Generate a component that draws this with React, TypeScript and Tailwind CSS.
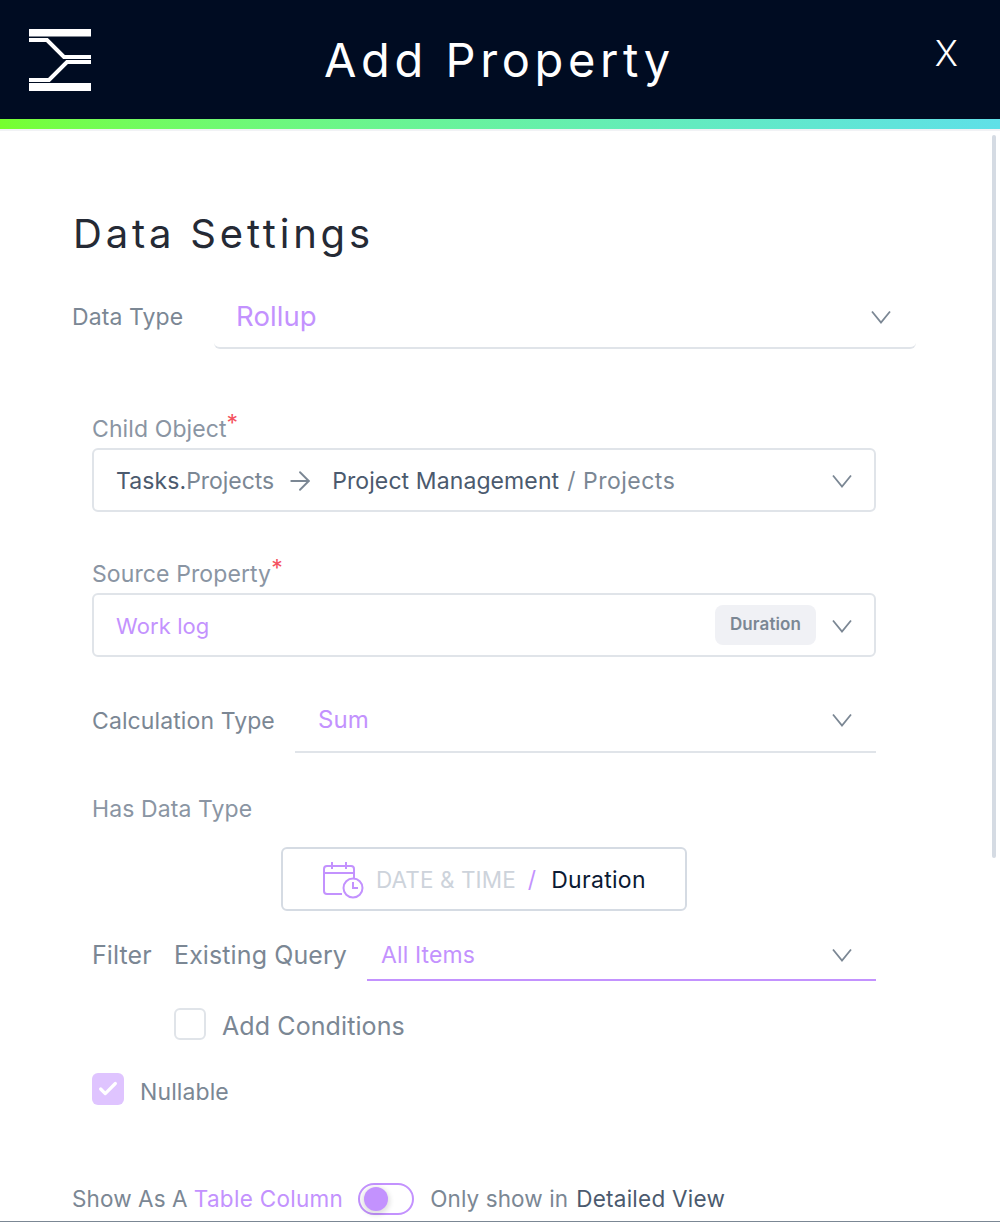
import { ArrowRight, Check } from 'lucide-react';

const purple = 'text-[#c392fe]';

function Logo() {
  return (
    <svg width="62" height="62" viewBox="0 0 62 62" className="shrink-0" aria-hidden="true">
      <path d="M0 0h62v7.500H0zM0 54h62v8H0z" fill="#fff" />
      <path d="M0 11h18l17 17h27M0 51h20l18-18h24" fill="none" stroke="#fff" strokeWidth="4" />
    </svg>
  );
}

function Chevron() {
  return (
    <svg width="20" height="14" viewBox="0 0 20 14" fill="none" stroke="#7b8794" strokeWidth="1.800" className="shrink-0" aria-hidden="true">
      <path d="M1 1.500l9 11 9-11" />
    </svg>
  );
}

function DateIcon() {
  return (
    <svg width="42" height="38" viewBox="0 0 42 38" fill="none" stroke="#c392fe" strokeWidth="2" className="shrink-0" aria-hidden="true">
      <path d="M20 33H5a3 3 0 0 1-3-3V8a3 3 0 0 1 3-3h24a3 3 0 0 1 3 3v9" />
      <path d="M2 12h30M10 1v7M24 1v7" />
      <circle cx="31" cy="27" r="9.500" />
      <path d="M31 21v6h5" />
    </svg>
  );
}

function Label({ children, required }: { children: React.ReactNode; required?: boolean }) {
  return (
    <div className="flex h-8 items-center text-[#8a95a3]">
      <span>{children}</span>
      {required && <span className="mb-3 text-[#f4525f]">*</span>}
    </div>
  );
}

export default function App() {
  return (
    <div
      className="relative h-[1222px] w-[1000px] overflow-hidden bg-white text-[23px] tracking-[0.1px] text-[#7b8794]"
      style={{ fontFamily: 'Inter, "Liberation Sans", sans-serif' }}
    >
      {/* Header */}
      <header className="flex h-[119px] items-center bg-[#000c22] pr-[42px] pl-[29px] text-white">
        <Logo />
        <h1 className="ml-[233px] text-[47px] leading-none tracking-[4.600px]">Add Property</h1>
        <span className="mb-[13px] ml-auto text-[35px] leading-none font-light">X</span>
      </header>
      <div className="h-[10px] bg-gradient-to-r from-[#76ff2e] to-[#5fe0e8]" />
      <div className="h-[2px] bg-[#f1f2f5]" />

      {/* Scrollbar */}
      <div className="absolute top-[135px] right-[4px] h-[723px] w-1 rounded-full bg-[#d5dbe3]" />

      <main className="pt-[79px]">
        <h2 className="pl-[73px] text-[40px] leading-[48px] tracking-[3.800px] text-[#252a35]">Data Settings</h2>

        <div className="mt-[25px] flex w-[916px] items-center pl-[72px]">
          <span className="w-[142px] shrink-0 pt-[3px]">Data Type</span>
          <div className="flex h-[66px] flex-1 items-center justify-between rounded-b-md border-b-2 border-[#e0e4e9] pt-[3px] pr-[25px] pl-[22px]">
            <span className={`text-[27.500px] ${purple}`}>Rollup</span>
            <Chevron />
          </div>
        </div>

        <div className="ml-[92px] w-[784px]">
          <div className="mt-[64px]">
            <Label required>Child Object</Label>
            <div className="mt-[3px] flex h-16 items-center justify-between rounded-md border-2 border-[#e0e4e9] pt-[2px] pr-[22px] pl-[22px]">
              <div className="flex items-center">
                <span className="text-[#4b5a6e]">Tasks.</span>
                <span className="tracking-[-0.050px]">Projects</span>
                <ArrowRight size={30} strokeWidth={1.500} className="mr-[17px] ml-[11px]" />
                <span className="text-[#4b5a6e]">Project Management</span>
                <span className="ml-[8px] tracking-[0.500px]">/ Projects</span>
              </div>
              <Chevron />
            </div>
          </div>

          <div className="mt-[46px]">
            <Label required>Source Property</Label>
            <div className="mt-[3px] flex h-16 items-center justify-between rounded-md border-2 border-[#e0e4e9] pt-[2px] pr-[22px] pl-[22px]">
              <span className={`text-[22px] ${purple}`}>Work log</span>
              <div className="flex items-center gap-[16px]">
                <span className="mb-[2px] flex h-10 w-[101px] items-center justify-center rounded-lg bg-[#f0f1f5] text-[17px] font-semibold">
                  Duration
                </span>
                <Chevron />
              </div>
            </div>
          </div>

          <div className="mt-[32px] flex items-center">
            <span className="w-[203px] shrink-0">Calculation Type</span>
            <div className="flex h-[64px] flex-1 items-center justify-between border-b-2 border-[#e0e4e9] pr-[24px] pl-[23px]">
              <span className={`text-[24px] ${purple}`}>Sum</span>
              <Chevron />
            </div>
          </div>

          <div className="mt-[40px]">
            <Label>Has Data Type</Label>
          </div>

          <div className="mt-[22px] ml-[189px] flex h-16 w-[406px] items-center rounded-md border-2 border-[#d5dbe3] pt-[2px] pl-[39px]">
            <DateIcon />
            <span className="ml-[12px] text-[22.500px] text-[#cdd3db]">DATE &amp; TIME</span>
            <span className={`mr-[15px] ml-[12px] ${purple}`}>/</span>
            <span className="tracking-[0.300px] text-[#0b1a33]">Duration</span>
          </div>

          <div className="mt-[20px] flex items-center">
            <span className="w-[82px] shrink-0 text-[25px]">Filter</span>
            <span className="w-[193px] shrink-0 text-[25px]">Existing Query</span>
            <div className="flex h-[50px] flex-1 items-center justify-between border-b-2 border-[#c392fe] pr-[24px] pl-[14px]">
              <span className={purple}>All Items</span>
              <Chevron />
            </div>
          </div>

          <div className="mt-[27px] ml-[82px] flex items-center gap-4">
            <div className="size-8 rounded-md border-2 border-[#e0e4e9]" />
            <span className="pt-1 text-[25px] leading-[28px]">Add Conditions</span>
          </div>

          <div className="mt-[33px] flex items-center gap-4">
            <div className="flex size-8 items-center justify-center rounded-md bg-[#dfc4ff]">
              <Check size={22} strokeWidth={3.500} className="text-white" />
            </div>
            <span className="pt-[6px] leading-[26px]">Nullable</span>
          </div>
        </div>

        <div className="mt-[77px] flex items-center pl-[72px] text-[22.500px]">
          <span>Show As A</span>
          <span className={`ml-[6px] tracking-[0.300px] ${purple}`}>Table Column</span>
          <div className="relative mr-4 ml-[15px] h-8 w-14 shrink-0 rounded-full border-2 border-[#c392fe]">
            <div className="absolute top-[2px] left-[4px] size-6 rounded-full bg-[#c392fe] shadow-[0_2px_5px_2px_rgba(0,0,0,0.12)]" />
          </div>
          <span>Only show in</span>
          <span className="ml-[8px] tracking-[0.250px] text-[#4b5a6e]">Detailed View</span>
        </div>
      </main>

      <div className="absolute right-0 bottom-0 left-0 h-[1px] bg-[#7b8794]" />
    </div>
  );
}
